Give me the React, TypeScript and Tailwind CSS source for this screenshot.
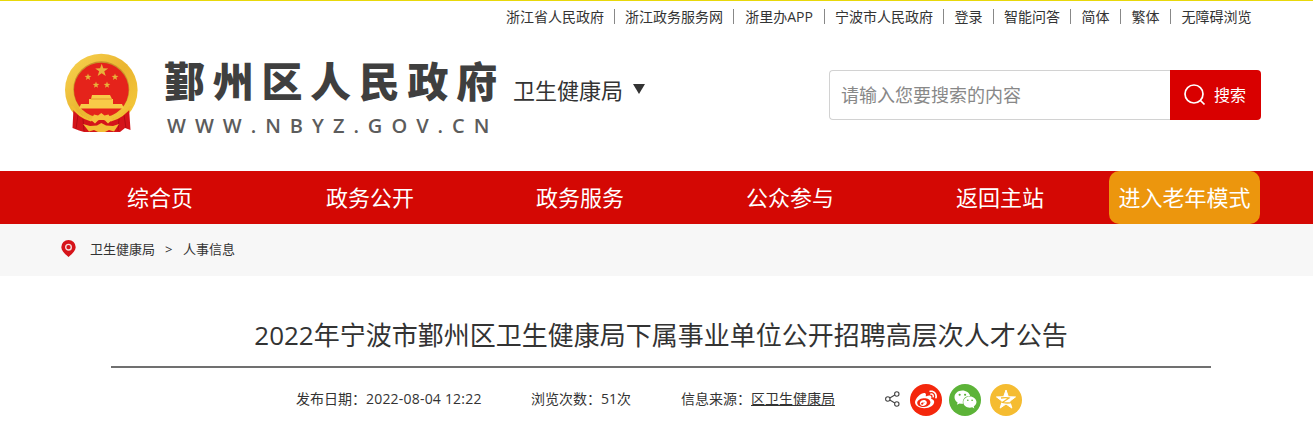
import { FaWeibo, FaWeixin } from 'react-icons/fa';

const topLinks = [
  { label: '浙江省人民政府', width: 'w-[119px]' },
  { label: '浙江政务服务网', width: 'w-[119px]' },
  { label: '浙里办APP', width: 'w-[91px]' },
  { label: '宁波市人民政府', width: 'w-[119px]' },
  { label: '登录', width: 'w-[50px]' },
  { label: '智能问答', width: 'w-[77px]' },
  { label: '简体', width: 'w-[50px]' },
  { label: '繁体', width: 'w-[50px]' },
  { label: '无障碍浏览', width: 'w-[91px]' },
];

const navItems = ['综合页', '政务公开', '政务服务', '公众参与', '返回主站'];

const STAR = 'M0 -10 L2.35 -3.24 L9.51 -3.09 L3.8 1.24 L5.88 8.09 L0 4 L-5.88 8.09 L-3.8 1.24 L-9.51 -3.09 L-2.35 -3.24 Z';

function Emblem() {
  return (
    <svg width="74" height="80" viewBox="0 0 74 80" className="shrink-0">
      <defs>
        <linearGradient id="gold" x1="0" y1="0" x2="1" y2="1">
          <stop offset="0" stopColor="#f8d552" />
          <stop offset="0.5" stopColor="#eab530" />
          <stop offset="1" stopColor="#f7cd3c" />
        </linearGradient>
      </defs>
      <ellipse cx="37.3" cy="37" rx="36.3" ry="36.3" fill="url(#gold)" />
      <circle cx="37.3" cy="36.3" r="28" fill="#c9922a" />
      <circle cx="37.3" cy="37" r="27.3" fill="#e5231b" />
      <g fill="#e8b23a">
        <path d={STAR} transform="translate(37.7 17.5) scale(.68)" />
        <path d={STAR} transform="translate(24 24) scale(.36)" />
        <path d={STAR} transform="translate(51 24) scale(.36)" />
        <path d={STAR} transform="translate(32 32) scale(.35)" />
        <path d={STAR} transform="translate(43 32) scale(.35)" />
      </g>
      {/* gate tower and its wall */}
      <path d="M28 42 H46 L48 46 H49 V51 H58 L60 55.5 H15 L17 51 H25 V46 H27 Z" fill="#f8cb48" />
      <path d="M27 46 H48" stroke="#d98f25" strokeWidth=".8" />
      {/* ribbon */}
      <path d="M9.5 55 Q18 64 28 67 H46 Q57 64 65 55 L66.5 77 L61 75 L56 79 H20 L15 77.5 L8.5 75 Z" fill="#d4141a" />
      <path d="M14 62 L12 76 M19 66 L20 78 M60 62 L62 75 M55 66 L54 78" stroke="#b30d12" strokeWidth="1" />
      <path d="M9 53 Q17 64 29 66.5 L27 68.5 Q14 65 6 53 Z M65.5 53 Q57 64 45 66.5 L47 68.5 Q60 65 68.5 53 Z" fill="#f1bf32" />
      <path d="M27 67 L30 61.5 L34 62.5 L37.3 60 L40.5 62.5 L44.5 61.5 L48 67 L44 70.5 L41 67.5 Q37 65.5 34 67.5 L31 70.5 Z" fill="#f5c13c" />
      <path d="M19 71 L26 73 L33 72.5 L37.3 70 L42 72.5 L49 73 L55 71 L50 78.5 L45 77 L41 79 H34 L30 77 L25 78.5 Z" fill="#f3bd35" />
    </svg>
  );
}

function TopBar() {
  return (
    <div className="flex h-[33px] justify-end border-t border-[#e8d80a] pr-[51px] pt-2 text-sm leading-4">
      {topLinks.map((link, i) => (
        <a
          key={link.label}
          className={`${link.width} h-[15px] whitespace-nowrap text-center ${i < topLinks.length - 1 ? 'border-r border-[#888]' : ''}`}
        >
          {link.label}
        </a>
      ))}
    </div>
  );
}

function Header() {
  return (
    <header className="flex h-[138px] items-start pl-16 pr-[52px]">
      <div className="mt-5">
        <Emblem />
      </div>
      <div className="ml-[26px] mt-[23px] w-[349px] shrink-0 whitespace-nowrap">
        <div className="h-[54px] text-[41px] font-black leading-[50px] tracking-[7.7px] text-[#3f3f3f]">鄞州区人民政府</div>
        <div className="ml-[3px] h-8 font-['Open_Sans','Noto_Sans',sans-serif] text-[20px] font-semibold leading-8 tracking-[9px] text-[#5c5c5c]">
          WWW.NBYZ.GOV.CN
        </div>
      </div>
      <div className="mt-[41px] flex items-start text-[22px] leading-8">
        卫生健康局
        <svg width="12" height="10" viewBox="0 0 12 10" className="ml-[10px] mt-[10px]">
          <path d="M0 0 H12 L6 10 Z" fill="#333" />
        </svg>
      </div>
      <div className="ml-auto mt-[37px] flex h-[50px] w-[432px]">
        <div className="flex-1 rounded-l border border-r-0 border-[#d2d2d2] pl-[11px] text-lg leading-[49px] text-[#888]">请输入您要搜索的内容</div>
        <button className="flex w-[91px] items-center rounded-r bg-[#d90000] pl-[13px] text-base text-white">
          <svg width="23" height="22" viewBox="0 0 23 22" fill="none" stroke="currentColor" strokeWidth="1.7">
            <circle cx="11" cy="10" r="9" />
            <path d="M17 16 L21.5 20.5" />
          </svg>
          <span className="ml-2">搜索</span>
        </button>
      </div>
    </header>
  );
}

function Nav() {
  return (
    <nav className="flex h-[53px] bg-[#d40804] pl-[55px] text-[22px] leading-[53px] text-white">
      {navItems.map((item) => (
        <a key={item} className="w-[210px] text-center">{item}</a>
      ))}
      <a className="ml-1 w-[151px] rounded-[10px] bg-[#ec960d] text-center">进入老年模式</a>
    </nav>
  );
}

function Breadcrumb() {
  return (
    <div className="flex h-[52px] items-center bg-[#f7f7f7] pl-[61px] text-[13px]">
      <svg width="15" height="17" viewBox="0 0 15 17" className="-mt-1">
        <path d="M7.5 0 A7.2 7.2 0 0 1 14.7 7.2 C14.7 10.5 11 14 7.5 17 C4 14 .3 10.5 .3 7.2 A7.2 7.2 0 0 1 7.5 0 Z" fill="#d6141a" />
        <circle cx="7.5" cy="7.2" r="2.8" fill="#d6141a" stroke="#f6dada" strokeWidth="1.4" />
      </svg>
      <span className="ml-[14px]">卫生健康局</span>
      <span className="ml-[10px] w-[18px]">&gt;</span>
      <span>人事信息</span>
    </div>
  );
}

function Share() {
  return (
    <div className="mt-0.5 flex items-center text-white">
      <svg width="15" height="16" viewBox="0 0 15 16" fill="none" stroke="#444" strokeWidth="1.1" className="-mt-[3px] mr-[10px]">
        <circle cx="2.8" cy="8" r="2.2" />
        <circle cx="11.8" cy="3" r="2.2" />
        <circle cx="11.8" cy="13" r="2.2" />
        <path d="M4.8 7 L9.8 4.1 M4.8 9 L9.8 11.9" />
      </svg>
      <span className="flex size-8 items-center justify-center rounded-full bg-[#f4270c]">
        <FaWeibo size={22} />
      </span>
      <span className="ml-[7px] flex size-8 items-center justify-center rounded-full bg-[#5cb338] pb-0.5">
        <FaWeixin size={23} />
      </span>
      <span className="ml-[9px] flex size-8 items-center justify-center rounded-full bg-[#f5bc31]">
        <svg width="22" height="22" viewBox="-11 -11 22 22">
          <path d={STAR} fill="#fff" stroke="#fff" strokeWidth="1" strokeLinejoin="round" />
          <path d="M-5 -2 Q0 -2.8 3 -2 L-3.6 2.4 Q2 3.6 6 2.4" fill="none" stroke="#f5bc31" strokeWidth="1.3" />
        </svg>
      </span>
    </div>
  );
}

export default function App() {
  return (
    <div className="h-[426px] w-[1313px] overflow-hidden bg-white font-['Open_Sans','Noto_Sans_CJK_SC',sans-serif] text-[#333]">
      <TopBar />
      <Header />
      <Nav />
      <Breadcrumb />
      <main className="ml-[111px] mt-[38px] w-[1100px]">
        <h1 className="h-[54px] whitespace-nowrap border-b-2 border-[#707070] text-center text-[26px] leading-[42px]">
          2022年宁波市鄞州区卫生健康局下属事业单位公开招聘高层次人才公告
        </h1>
        <div className="mt-[15px] flex h-8 items-center whitespace-nowrap pl-[185px] text-sm">
          <span className="w-[235px]">
            发布日期：<span className="tracking-[0.2px]">2022-08-04 12:22</span>
          </span>
          <span className="w-[150px]">浏览次数：51次</span>
          <span className="w-[204px]">信息来源：<u>区卫生健康局</u></span>
          <Share />
        </div>
      </main>
    </div>
  );
}
